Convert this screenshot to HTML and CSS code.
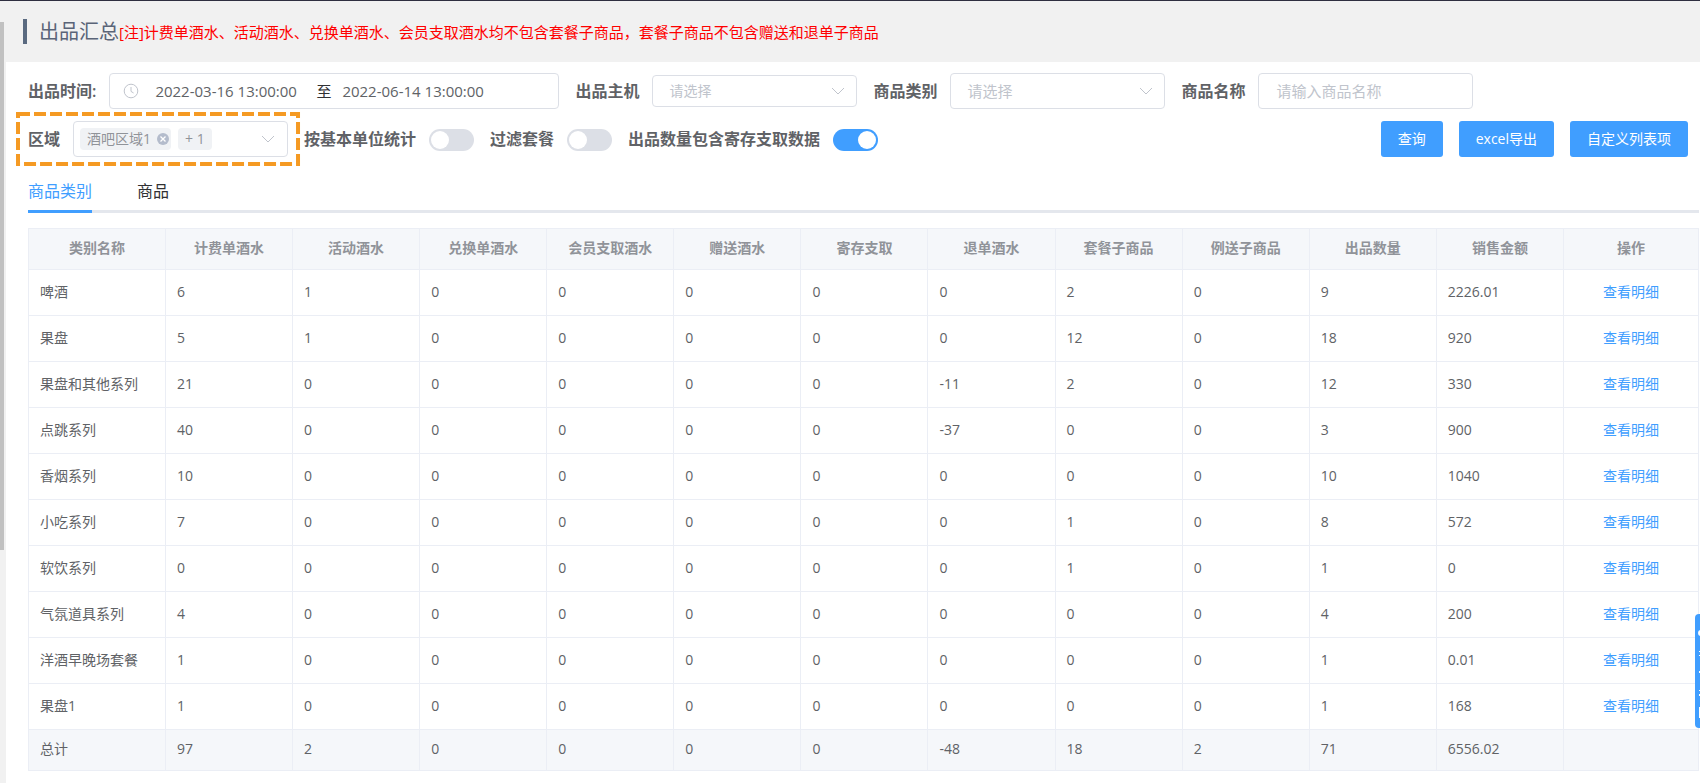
FILE: index.html
```html
<!DOCTYPE html>
<html lang="zh-CN">
<head>
<meta charset="utf-8">
<title>出品汇总</title>
<link rel="stylesheet" href="styles.css">
</head>
<body>
<div class="app">
  <div class="rail"><div class="rail-thumb"></div></div>
  <div class="page">
    <header class="page-head">
      <h1 class="title">出品汇总</h1>
      <span class="note">[注]计费单酒水、活动酒水、兑换单酒水、会员支取酒水均不包含套餐子商品，套餐子商品不包含赠送和退单子商品</span>
    </header>
    <main class="content">
      <form class="filters">
        <div class="filter-row">
          <div class="field">
            <label class="label" for="from">出品时间:</label>
            <div class="range">
              <svg class="clock" viewBox="0 0 16 16" aria-hidden="true"><circle cx="8" cy="8" r="6.8"/><path d="M8 4v4.400l2.600 1.600"/></svg>
              <input class="range-input" id="from" type="text" value="2022-03-16 13:00:00">
              <span class="range-sep">至</span>
              <input class="range-input" type="text" aria-label="结束时间" value="2022-06-14 13:00:00">
            </div>
          </div>
          <div class="field">
            <label class="label" for="host">出品主机</label>
            <div class="select select-small">
              <select id="host"><option>请选择</option></select>
              <svg class="chevron" viewBox="0 0 14 8" aria-hidden="true"><path d="M1 1l6 6 6-6"/></svg>
            </div>
          </div>
          <div class="field">
            <label class="label" for="category">商品类别</label>
            <div class="select">
              <select id="category"><option>请选择</option></select>
              <svg class="chevron" viewBox="0 0 14 8" aria-hidden="true"><path d="M1 1l6 6 6-6"/></svg>
            </div>
          </div>
          <div class="field">
            <label class="label" for="name">商品名称</label>
            <input class="text-input" id="name" type="text" placeholder="请输入商品名称">
          </div>
        </div>
        <div class="filter-row">
          <div class="field area">
            <svg class="marker" aria-hidden="true"><rect x="2" y="2"/></svg>
            <span class="label" id="area-label">区域</span>
            <div class="multi" role="combobox" tabindex="0" aria-expanded="false" aria-labelledby="area-label">
              <span class="tag">酒吧区域1<svg class="tag-close" viewBox="0 0 12 12" aria-hidden="true"><circle cx="6" cy="6" r="6"/><path d="M3.500 3.500l5 5M8.500 3.500l-5 5"/></svg></span>
              <span class="tag">+ 1</span>
              <svg class="chevron" viewBox="0 0 14 8" aria-hidden="true"><path d="M1 1l6 6 6-6"/></svg>
            </div>
          </div>
          <div class="field">
            <label class="label" for="unit">按基本单位统计</label>
            <input class="switch" id="unit" type="checkbox">
          </div>
          <div class="field">
            <label class="label" for="combo">过滤套餐</label>
            <input class="switch" id="combo" type="checkbox">
          </div>
          <div class="field">
            <label class="label" for="stored">出品数量包含寄存支取数据</label>
            <input class="switch" id="stored" type="checkbox" checked>
          </div>
          <div class="actions">
            <button class="btn" type="button">查询</button>
            <button class="btn" type="button">excel导出</button>
            <button class="btn" type="button">自定义列表项</button>
          </div>
        </div>
      </form>
      <nav class="tabs">
        <a class="tab tab-active" href="#category">商品类别</a>
        <a class="tab" href="#goods">商品</a>
      </nav>
      <table class="table">
        <colgroup><col class="col-name"><col span="11"><col class="col-op"></colgroup>
        <thead><tr><th>类别名称</th><th>计费单酒水</th><th>活动酒水</th><th>兑换单酒水</th><th>会员支取酒水</th><th>赠送酒水</th><th>寄存支取</th><th>退单酒水</th><th>套餐子商品</th><th>例送子商品</th><th>出品数量</th><th>销售金额</th><th>操作</th></tr></thead>
        <tbody>
          <tr><td>啤酒</td><td>6</td><td>1</td><td>0</td><td>0</td><td>0</td><td>0</td><td>0</td><td>2</td><td>0</td><td>9</td><td>2226.01</td><td class="op"><a href="#d1">查看明细</a></td></tr>
          <tr><td>果盘</td><td>5</td><td>1</td><td>0</td><td>0</td><td>0</td><td>0</td><td>0</td><td>12</td><td>0</td><td>18</td><td>920</td><td class="op"><a href="#d2">查看明细</a></td></tr>
          <tr><td>果盘和其他系列</td><td>21</td><td>0</td><td>0</td><td>0</td><td>0</td><td>0</td><td>-11</td><td>2</td><td>0</td><td>12</td><td>330</td><td class="op"><a href="#d3">查看明细</a></td></tr>
          <tr><td>点跳系列</td><td>40</td><td>0</td><td>0</td><td>0</td><td>0</td><td>0</td><td>-37</td><td>0</td><td>0</td><td>3</td><td>900</td><td class="op"><a href="#d4">查看明细</a></td></tr>
          <tr><td>香烟系列</td><td>10</td><td>0</td><td>0</td><td>0</td><td>0</td><td>0</td><td>0</td><td>0</td><td>0</td><td>10</td><td>1040</td><td class="op"><a href="#d5">查看明细</a></td></tr>
          <tr><td>小吃系列</td><td>7</td><td>0</td><td>0</td><td>0</td><td>0</td><td>0</td><td>0</td><td>1</td><td>0</td><td>8</td><td>572</td><td class="op"><a href="#d6">查看明细</a></td></tr>
          <tr><td>软饮系列</td><td>0</td><td>0</td><td>0</td><td>0</td><td>0</td><td>0</td><td>0</td><td>1</td><td>0</td><td>1</td><td>0</td><td class="op"><a href="#d7">查看明细</a></td></tr>
          <tr><td>气氛道具系列</td><td>4</td><td>0</td><td>0</td><td>0</td><td>0</td><td>0</td><td>0</td><td>0</td><td>0</td><td>4</td><td>200</td><td class="op"><a href="#d8">查看明细</a></td></tr>
          <tr><td>洋酒早晚场套餐</td><td>1</td><td>0</td><td>0</td><td>0</td><td>0</td><td>0</td><td>0</td><td>0</td><td>0</td><td>1</td><td>0.01</td><td class="op"><a href="#d9">查看明细</a></td></tr>
          <tr><td>果盘1</td><td>1</td><td>0</td><td>0</td><td>0</td><td>0</td><td>0</td><td>0</td><td>0</td><td>0</td><td>1</td><td>168</td><td class="op"><a href="#d10">查看明细</a></td></tr>
        </tbody>
        <tfoot><tr><td>总计</td><td>97</td><td>2</td><td>0</td><td>0</td><td>0</td><td>0</td><td>-48</td><td>18</td><td>2</td><td>71</td><td>6556.02</td><td></td></tr></tfoot>
      </table>
    </main>
  </div>
  <button class="side-tab" type="button" aria-label="展开侧栏">
    <svg viewBox="0 0 5 114" aria-hidden="true"><circle cx="6" cy="19" r="3"/><path d="M4 37h1v1h-1zM4 41h1v1h-1zM4 57h1v2h-1zM4 76h1v1h-1zM4 80h1v2h-1zM4 93h1v11h-1z"/></svg>
  </button>
</div>
</body>
</html>
```
FILE: styles.css
```css
* { box-sizing: border-box; }

body {
  margin: 0;
  background: #fff;
  color: #606266;
  font: 14px/20px "Open Sans", "Noto Sans CJK SC", sans-serif;
}

input, select, button { font: inherit; color: inherit; }

.app {
  display: flex;
  min-height: 100vh;
  border-top: 1px solid #2f2f40;
}

.rail {
  flex: none;
  width: 6px;
  padding-top: 21px;
  background: #f1f1f1;
}
.rail-thumb {
  width: 4px;
  height: 69.4%;
  background: #c1c1c1;
}

.page { flex: 1; min-width: 0; }

.page-head {
  display: flex;
  align-items: center;
  height: 61px;
  padding: 0 17px;
  background: #f1f1f1;
}
.title {
  margin: 0;
  padding-left: 12px;
  border-left: 4px solid #5a6a80;
  color: #5a6478;
  font-size: 20px;
  font-weight: 400;
  line-height: 25px;
}
.note {
  color: #f00;
  font-size: 15px;
  white-space: nowrap;
}

.content { padding: 11px 1px 0 22px; }

.filters { display: grid; gap: 12px; }
.filter-row {
  display: flex;
  align-items: center;
  gap: 16px;
  height: 36px;
  padding-right: 11px;
}
.field {
  display: flex;
  align-items: center;
  gap: 13px;
}
.label {
  font-size: 16px;
  font-weight: 600;
  white-space: nowrap;
}

.range {
  display: flex;
  align-items: center;
  width: 450px;
  height: 36px;
  padding: 0 13px;
  border: 1px solid #dcdfe6;
  border-radius: 4px;
  font-size: 15px;
}
.clock {
  width: 16px;
  height: 16px;
  margin-right: 16px;
  fill: none;
  stroke: #c0c4cc;
}
.range-input {
  width: 161px;
  padding: 0;
  border: 0;
  outline: 0;
}
.range-sep { width: 26px; color: #303133; }

.select, .multi { position: relative; width: 215px; }
.select select {
  display: block;
  width: 100%;
  height: 36px;
  padding: 0 16px;
  border: 1px solid #dcdfe6;
  border-radius: 4px;
  background: #fff;
  color: #c0c4cc;
  font-size: 15px;
  appearance: none;
}
.select-small { width: 205px; }
.select-small select { height: 32px; font-size: 14px; }
.chevron {
  position: absolute;
  top: 50%;
  right: 12px;
  width: 14px;
  height: 8px;
  margin-top: -4px;
  fill: none;
  stroke: #c0c4cc;
  pointer-events: none;
}
.text-input {
  width: 215px;
  height: 36px;
  padding: 0 17px;
  border: 1px solid #dcdfe6;
  border-radius: 4px;
  font-size: 15px;
}
.text-input::placeholder { color: #c0c4cc; }

.area { position: relative; }
.marker {
  position: absolute;
  inset: -9px -12px;
  width: calc(100% + 24px);
  height: calc(100% + 18px);
  overflow: visible;
  pointer-events: none;
}
.marker rect {
  width: calc(100% - 4px);
  height: calc(100% - 4px);
  fill: none;
  stroke: #f59a23;
  stroke-width: 4;
  stroke-dasharray: 12 4;
}
.multi {
  display: flex;
  align-items: center;
  gap: 7px;
  height: 36px;
  padding: 0 6px;
  border: 1px solid #dcdfe6;
  border-radius: 4px;
}
.tag {
  display: flex;
  align-items: center;
  gap: 6px;
  height: 22px;
  padding: 0 2px 0 7px;
  border-radius: 4px;
  background: #f0f2f5;
  color: #909399;
}
.tag + .tag { padding-right: 7px; }
.tag-close { width: 12px; height: 12px; fill: #b4bccc; }
.tag-close path { stroke: #fff; stroke-width: 1.3; }

.switch {
  appearance: none;
  width: 45px;
  height: 22px;
  margin: 2px 0 0;
  padding: 2px;
  border-radius: 11px;
  background: #dcdfe6;
}
.switch::before {
  content: "";
  display: block;
  width: 18px;
  height: 18px;
  border-radius: 50%;
  background: #fff;
}
.switch:checked { background: #409eff; }
.switch:checked::before { margin-left: auto; }

.actions { display: flex; gap: 16px; margin-left: auto; }
.btn {
  height: 36px;
  padding: 0 17px;
  border: 0;
  border-radius: 3px;
  background: #409eff;
  color: #fff;
  white-space: nowrap;
}

.tabs {
  display: flex;
  gap: 45px;
  height: 56px;
  border-bottom: 3px solid #e4e7ed;
}
.tab {
  height: 56px;
  padding-top: 24px;
  color: #303133;
  font-size: 16px;
  text-decoration: none;
}
.tab-active {
  border-bottom: 3px solid #409eff;
  color: #409eff;
}

.table {
  width: 100%;
  margin-top: 15px;
  border-collapse: collapse;
  table-layout: fixed;
}
.col-name { width: 137px; }
.col-op { width: 135px; }
.table th, .table td {
  height: 46px;
  padding: 0 11px 2px;
  border: 1px solid #ebeef5;
  text-align: left;
  white-space: nowrap;
}
.table th {
  height: 41px;
  background: #f5f7fa;
  color: #909399;
  font-weight: 600;
  text-align: center;
}
.table tfoot td { height: 41px; background: #f5f7fa; }
.table .op { text-align: center; }
.op a { color: #409eff; text-decoration: none; }

.side-tab {
  position: fixed;
  top: 614px;
  right: 0;
  width: 5px;
  height: 114px;
  padding: 0;
  border: 0;
  border-radius: 4px 0 0 4px;
  background: #409eff;
  overflow: hidden;
}
.side-tab svg {
  display: block;
  width: 5px;
  height: 114px;
  fill: #fff;
}
```
